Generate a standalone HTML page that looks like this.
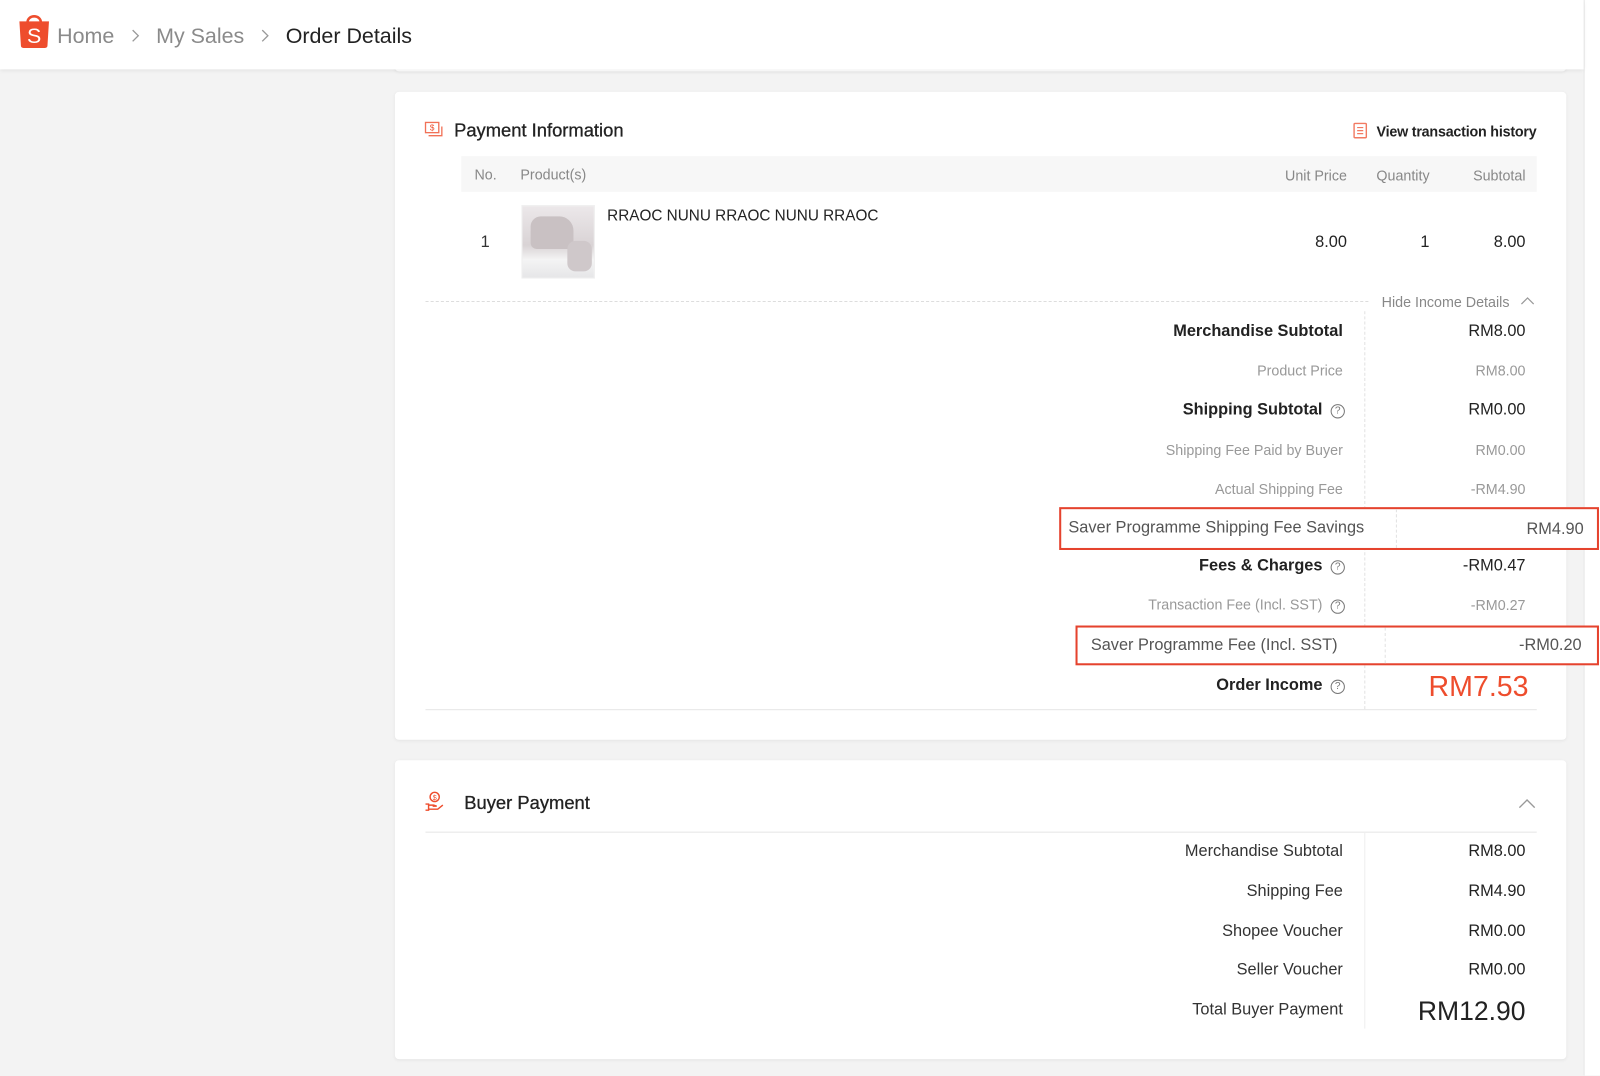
<!DOCTYPE html>
<html><head><meta charset="utf-8">
<style>
*{margin:0;padding:0;box-sizing:border-box}
html,body{width:1600px;height:1076px;overflow:hidden;background:#f3f3f3;font-family:"Liberation Sans",Arial,sans-serif}
#w{position:absolute;left:0;top:0;width:1568px;height:1054px;transform:scale(1.020408);transform-origin:0 0;background:#f3f3f3}
.a{position:absolute;white-space:nowrap}
.card{position:absolute;background:#fff;border-radius:4px;box-shadow:0 1px 3px rgba(0,0,0,.06)}
.r{position:absolute;white-space:nowrap;text-align:right;transform:translateY(-44%)}
.q{display:inline-block;width:14px;height:14px;border:1px solid #777;border-radius:50%;font-size:10px;line-height:12px;text-align:center;color:#777;margin-left:8px;vertical-align:1px;font-weight:normal}
</style></head><body>
<div id="w">
<div class="a" style="left:1552px;top:0;width:1px;height:1054px;background:#e6e6e6"></div>
<div class="a" style="left:1553px;top:0;width:15px;height:1054px;background:#fff"></div>
<div class="card" style="left:387px;top:20px;width:1148px;height:50px"></div>
<div class="a" style="left:0;top:0;width:1552px;height:68px;background:#fff;box-shadow:0 1px 4px rgba(0,0,0,.08)"></div>
<svg class="a" style="left:17px;top:11px" width="33" height="37" viewBox="0 0 33 37"><path d="M10 11 C10 3 23 3 23 11" fill="none" stroke="#ee4d2d" stroke-width="2.5"/><path d="M2 10 H31 L29.5 34 Q29.3 36 27 36 H6 Q3.7 36 3.5 34 Z" fill="#ee4d2d"/><text x="16.5" y="31" font-size="21" fill="#fff" text-anchor="middle" font-family="Liberation Sans">S</text></svg>
<div class="a" style="left:56px;top:24px;font-size:21px;color:#8a8a8a">Home</div>
<svg class="a" style="left:128px;top:28px" width="10" height="14" viewBox="0 0 10 14"><path d="M2 1.5 L7.5 7 L2 12.5" fill="none" stroke="#999" stroke-width="1.3"/></svg>
<div class="a" style="left:153px;top:24px;font-size:21px;color:#8a8a8a">My Sales</div>
<svg class="a" style="left:255px;top:28px" width="10" height="14" viewBox="0 0 10 14"><path d="M2 1.5 L7.5 7 L2 12.5" fill="none" stroke="#999" stroke-width="1.3"/></svg>
<div class="a" style="left:280px;top:24px;font-size:21px;color:#222">Order Details</div>

<div class="card" style="left:387px;top:90px;width:1148px;height:635px"></div>
<svg class="a" style="left:416px;top:119px" width="19" height="17" viewBox="0 0 19 17"><rect x="1" y="1" width="13" height="10" fill="none" stroke="#ee4d2d" stroke-width="1.3" opacity=".8"/><path d="M4 14 H17 V5" fill="none" stroke="#ee4d2d" stroke-width="1.3" opacity=".8"/><text x="7.5" y="9" font-size="8" fill="#ee4d2d" text-anchor="middle">$</text></svg>
<div class="a" style="left:445px;top:118px;font-size:18px;color:#222;-webkit-text-stroke:0.3px #222">Payment Information</div>
<svg class="a" style="left:1326px;top:120px" width="14" height="16" viewBox="0 0 14 16"><rect x="1" y="1" width="12" height="14" rx="1" fill="none" stroke="#ee4d2d" stroke-width="1.4" opacity=".75"/><path d="M4 5H10M4 8H10M4 11H10" stroke="#ee4d2d" stroke-width="1.2" opacity=".75"/></svg>
<div class="a" style="left:1349px;top:121px;font-size:14px;color:#222;font-weight:bold;letter-spacing:-.2px">View transaction history</div>
<div class="a" style="left:452px;top:153px;width:1054px;height:35px;background:#f7f7f7"></div>
<div class="a" style="left:465px;top:163px;font-size:14px;color:#888">No.</div>
<div class="a" style="left:510px;top:163px;font-size:14px;color:#888">Product(s)</div>
<div class="r" style="right:248px;top:171px;font-size:14px;color:#888">Unit Price</div>
<div class="r" style="right:167px;top:171px;font-size:14px;color:#888">Quantity</div>
<div class="r" style="right:73px;top:171px;font-size:14px;color:#888">Subtotal</div>
<div class="a" style="left:471px;top:229px;font-size:16px;color:#333">1</div>
<div class="a" style="left:511px;top:201px;width:72px;height:72px;background:linear-gradient(180deg,#ece8ea 0%,#d9d3d5 55%,#f4f4f4 75%,#e6e6e8 100%);border:1px solid #eee"></div>
<div class="a" style="left:520px;top:212px;width:42px;height:32px;background:#c9c1c3;border-radius:10px 14px 6px 6px"></div>
<div class="a" style="left:556px;top:236px;width:24px;height:30px;background:#cfc8ca;border-radius:8px"></div>
<div class="a" style="left:595px;top:203px;font-size:15px;color:#222">RRAOC NUNU RRAOC NUNU RRAOC</div>
<div class="r" style="right:248px;top:237px;font-size:16px;color:#222">8.00</div>
<div class="a" style="left:1392px;top:229px;font-size:16px;color:#222">1</div>
<div class="r" style="right:73px;top:237px;font-size:16px;color:#222">8.00</div>

<div class="a" style="left:417px;top:295px;width:924px;border-top:1px dashed #ddd"></div>
<div class="a" style="left:1354px;top:288px;font-size:14px;color:#888">Hide Income Details</div>
<svg class="a" style="left:1490px;top:290px" width="14" height="10" viewBox="0 0 14 10"><path d="M1 8 L7 2 L13 8" fill="none" stroke="#999" stroke-width="1.2"/></svg>
<div class="a" style="left:1337px;top:305px;height:390px;border-left:1px dashed #e2e2e2"></div>

<div class="r" style="right:252px;top:324px;font-size:16px;color:#222;font-weight:bold">Merchandise Subtotal</div>
<div class="r" style="right:73px;top:324px;font-size:16px;color:#222">RM8.00</div>
<div class="r" style="right:252px;top:362px;font-size:14px;color:#999">Product Price</div>
<div class="r" style="right:73px;top:362px;font-size:14px;color:#999">RM8.00</div>
<div class="r" style="right:250px;top:401px;font-size:16px;color:#222;font-weight:bold">Shipping Subtotal<span class="q">?</span></div>
<div class="r" style="right:73px;top:401px;font-size:16px;color:#222">RM0.00</div>
<div class="r" style="right:252px;top:440px;font-size:14px;color:#999">Shipping Fee Paid by Buyer</div>
<div class="r" style="right:73px;top:440px;font-size:14px;color:#999">RM0.00</div>
<div class="r" style="right:252px;top:478px;font-size:14px;color:#999">Actual Shipping Fee</div>
<div class="r" style="right:73px;top:478px;font-size:14px;color:#999">-RM4.90</div>

<div class="a" style="left:1038px;top:497px;width:529px;height:42px;border:2px solid #e5432e;background:#fff"></div>
<div class="a" style="left:1368px;top:499px;height:38px;border-left:1px dashed #e2e2e2"></div>
<div class="r" style="left:1047px;top:517px;font-size:16px;color:#555;text-align:left">Saver Programme Shipping Fee Savings</div>
<div class="r" style="right:16px;top:518px;font-size:16px;color:#555">RM4.90</div>

<div class="r" style="right:250px;top:554px;font-size:16px;color:#222;font-weight:bold">Fees &amp; Charges<span class="q">?</span></div>
<div class="r" style="right:73px;top:554px;font-size:16px;color:#222">-RM0.47</div>
<div class="r" style="right:250px;top:592px;font-size:14px;color:#999">Transaction Fee (Incl. SST)<span class="q">?</span></div>
<div class="r" style="right:73px;top:592px;font-size:14px;color:#999">-RM0.27</div>

<div class="a" style="left:1054px;top:613px;width:513px;height:39px;border:2px solid #e5432e;background:#fff"></div>
<div class="a" style="left:1357px;top:615px;height:35px;border-left:1px dashed #e2e2e2"></div>
<div class="r" style="left:1069px;top:632px;font-size:16px;color:#555;text-align:left">Saver Programme Fee (Incl. SST)</div>
<div class="r" style="right:18px;top:632px;font-size:16px;color:#555">-RM0.20</div>

<div class="r" style="right:250px;top:671px;font-size:16px;color:#222;font-weight:bold">Order Income<span class="q">?</span></div>
<div class="r" style="right:70px;top:671px;font-size:28px;color:#ee4d2d">RM7.53</div>
<div class="a" style="left:417px;top:695px;width:1089px;border-top:1px solid #e5e5e5"></div>

<div class="card" style="left:387px;top:745px;width:1148px;height:293px"></div>
<svg class="a" style="left:416px;top:775px" width="20" height="20" viewBox="0 0 20 20"><circle cx="10" cy="6" r="4.5" fill="none" stroke="#ee4d2d" stroke-width="1.4"/><text x="10" y="9" font-size="7" fill="#ee4d2d" text-anchor="middle">$</text><path d="M1 13 H4 V19 H1 M4 14 H9 L12 15 H8 M4 18 H13 L18 14" fill="none" stroke="#ee4d2d" stroke-width="1.4"/></svg>
<div class="a" style="left:455px;top:777px;font-size:18px;color:#222;-webkit-text-stroke:0.3px #222">Buyer Payment</div>
<svg class="a" style="left:1488px;top:782px" width="17" height="11" viewBox="0 0 17 11"><path d="M1 9.5 L8.5 2 L16 9.5" fill="none" stroke="#999" stroke-width="1.3"/></svg>
<div class="a" style="left:417px;top:815px;width:1089px;border-top:1px solid #e5e5e5"></div>
<div class="a" style="left:1337px;top:815px;height:193px;border-left:1px solid #eee"></div>
<div class="r" style="right:252px;top:834px;font-size:16px;color:#333">Merchandise Subtotal</div>
<div class="r" style="right:73px;top:834px;font-size:16px;color:#222">RM8.00</div>
<div class="r" style="right:252px;top:873px;font-size:16px;color:#333">Shipping Fee</div>
<div class="r" style="right:73px;top:873px;font-size:16px;color:#222">RM4.90</div>
<div class="r" style="right:252px;top:912px;font-size:16px;color:#333">Shopee Voucher</div>
<div class="r" style="right:73px;top:912px;font-size:16px;color:#222">RM0.00</div>
<div class="r" style="right:252px;top:950px;font-size:16px;color:#333">Seller Voucher</div>
<div class="r" style="right:73px;top:950px;font-size:16px;color:#222">RM0.00</div>
<div class="r" style="right:252px;top:989px;font-size:16px;color:#333">Total Buyer Payment</div>
<div class="r" style="right:73px;top:989px;font-size:26px;color:#222">RM12.90</div>
</div>
</body></html>
